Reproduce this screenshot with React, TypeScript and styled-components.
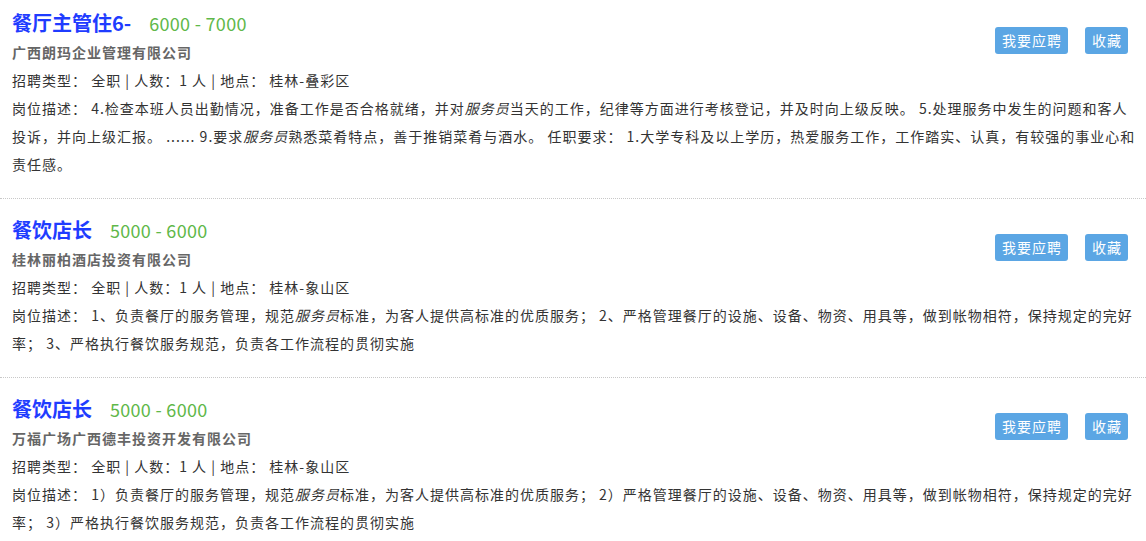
import styled, { createGlobalStyle } from 'styled-components';

const GlobalStyle = createGlobalStyle`
  html, body {
    margin: 0;
    padding: 0;
    background: #fff;
  }
  body {
    font-family: "Noto Sans CJK SC", "Noto Sans", sans-serif;
    color: #333;
    overflow: hidden;
  }
`;

const JobList = styled.div`
  margin-top: -8px;
`;

const JobCard = styled.div`
  padding: 16px 6px 20px 12px;
  border-bottom: 1px dotted #c8c8c8;
  &::after {
    content: '';
    display: block;
    clear: both;
  }
`;

const Actions = styled.div`
  float: right;
  display: flex;
  gap: 17px;
  margin: 19px 12px 0 0;
`;

const ActionButton = styled.button`
  height: 27px;
  padding: 0 6px 0 7px;
  border: none;
  border-radius: 3px;
  background: #5ba6e4;
  color: #fff;
  font-family: inherit;
  font-size: 14px;
  letter-spacing: 1px;
  line-height: 27px;
  cursor: pointer;
`;

const TitleRow = styled.div`
  display: flex;
  align-items: baseline;
  gap: 18px;
  height: 30px;
  line-height: 30px;
`;

const JobName = styled.a`
  color: #1f3cff;
  font-size: 20px;
  font-weight: 700;
  text-decoration: none;
`;

const Salary = styled.span`
  color: #5fb84a;
  font-size: 18px;
  letter-spacing: 0.3px;
`;

const Company = styled.div`
  color: #666;
  font-size: 14px;
  font-weight: 700;
  letter-spacing: 1px;
  line-height: 28px;
`;

const InfoLine = styled.div`
  font-size: 14px;
  letter-spacing: 1px;
  line-height: 28px;
  color: #333;
`;

const Keyword = styled.em`
  font-style: italic;
`;

type Job = {
  name: string;
  salary: string;
  company: string;
  location: string;
  desc: (string | { kw: string })[];
};

const jobs: Job[] = [
  {
    name: '餐厅主管住6-',
    salary: '6000 - 7000',
    company: '广西朗玛企业管理有限公司',
    location: '桂林-叠彩区',
    desc: [
      '岗位描述：\u00a04.检查本班人员出勤情况，准备工作是否合格就绪，并对',
      { kw: '服务员' },
      '当天的工作，纪律等方面进行考核登记，并及时向上级反映。 5.处理服务中发生的问题和客人投诉，并向上级汇报。 ...... 9.要求',
      { kw: '服务员' },
      '熟悉菜肴特点，善于推销菜肴与酒水。 任职要求： 1.大学专科及以上学历，热爱服务工作，工作踏实、认真，有较强的事业心和责任感。',
    ],
  },
  {
    name: '餐饮店长',
    salary: '5000 - 6000',
    company: '桂林丽柏酒店投资有限公司',
    location: '桂林-象山区',
    desc: [
      '岗位描述：\u00a01、负责餐厅的服务管理，规范',
      { kw: '服务员' },
      '标准，为客人提供高标准的优质服务； 2、严格管理餐厅的设施、设备、物资、用具等，做到帐物相符，保持规定的完好率； 3、严格执行餐饮服务规范，负责各工作流程的贯彻实施',
    ],
  },
  {
    name: '餐饮店长',
    salary: '5000 - 6000',
    company: '万福广场广西德丰投资开发有限公司',
    location: '桂林-象山区',
    desc: [
      '岗位描述：\u00a01）负责餐厅的服务管理，规范',
      { kw: '服务员' },
      '标准，为客人提供高标准的优质服务； 2）严格管理餐厅的设施、设备、物资、用具等，做到帐物相符，保持规定的完好率； 3）严格执行餐饮服务规范，负责各工作流程的贯彻实施',
    ],
  },
];

export default function App() {
  return (
    <>
      <GlobalStyle />
      <JobList>
        {jobs.map((job, i) => (
          <JobCard key={i}>
            <Actions>
              <ActionButton>我要应聘</ActionButton>
              <ActionButton>收藏</ActionButton>
            </Actions>
            <TitleRow>
              <JobName href="#">{job.name}</JobName>
              <Salary>{job.salary}</Salary>
            </TitleRow>
            <Company>{job.company}</Company>
            <InfoLine>{`招聘类型：\u00a0全职 | 人数：1 人 | 地点：\u00a0${job.location}`}</InfoLine>
            <InfoLine>
              {job.desc.map((part, j) =>
                typeof part === 'string' ? part : <Keyword key={j}>{part.kw}</Keyword>
              )}
            </InfoLine>
          </JobCard>
        ))}
      </JobList>
    </>
  );
}
